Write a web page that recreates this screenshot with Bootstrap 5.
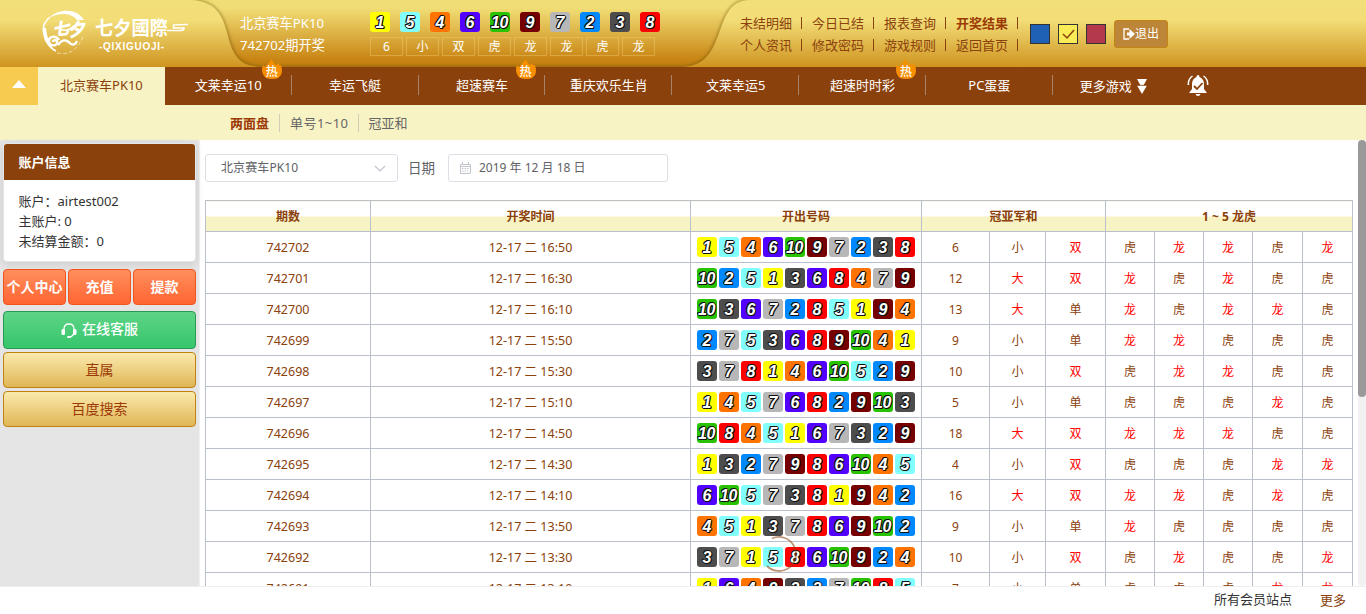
<!DOCTYPE html>
<html lang="zh-CN">
<head>
<meta charset="utf-8">
<meta name="viewport" content="width=device-width, initial-scale=1">
<title>七夕國際 - 开奖结果</title>
<link href="https://cdn.jsdelivr.net/npm/bootstrap@5.3.0/dist/css/bootstrap.min.css" rel="stylesheet">
<style>
body{font:13px/20px "Noto Sans","Noto Sans CJK SC",sans-serif;color:#333;height:614px;overflow:hidden;background:#fff}
a{text-decoration:none;color:inherit}
.topbar{height:67px;background:linear-gradient(#f3df7a 0,#f2dd77 30%,#cf9420 100%)}
.brand-box{width:190px;padding:8px 0 0 40px}
.draw-panel{width:560px;padding:12px 0 0 50px;color:#fff}
.draw-bg{left:0;top:0;width:560px;height:67px}
.draw-title{width:130px;font-size:13.2px;line-height:22px}
.ball{width:20px;height:20px;border-radius:3px;font:italic bold 16px/21px "Liberation Sans",Arial,sans-serif;color:#fff;text-align:center;
 text-shadow:-1px 0 #111,1px 0 #111,0 -1px #111,0 1px #111,1px 1px #111,-1px -1px #111}
.ball.n10{letter-spacing:-.5px;text-indent:-1px}
.n1{background:#ff0}.n2{background:#0089ff}.n3{background:#4d4d4d}.n4{background:#ff7300}.n5{background:#81ffff}
.n6{background:#5200ff}.n7{background:#b7b7b7}.n8{background:red}.n9{background:#760000}.n10{background:#28c200}
.top-balls{gap:10px}
.top-results{gap:3px;margin-top:5px}
.result-box{width:33px;height:19px;border:1px solid rgba(255,225,150,.3);font-size:12px;line-height:17px;text-align:center}
.quick{display:grid;grid-template-columns:repeat(4,72px);margin:12px 0 0 -10px;color:#8b410c;height:44px}
.quick a{line-height:22px;height:22px}
.quick a::after{content:"";display:inline-block;width:1px;height:12px;background:#8b410c;margin-left:9px;vertical-align:-1px}
.tools{gap:8px;margin-left:2px}
.swatch{width:20px;height:20px;border:1px solid #333}
.btn-exit{width:54px;height:28px;background:#bc8538;border:1px solid #c38413;border-radius:3px;color:#fff;font-size:12px;line-height:26px}
.gamebar{height:38px;background:#8b410c;color:#fff}
.gamebar .toggle{width:38px;background:#f7cb50}
.game{width:126.85px;line-height:36px;text-align:center;position:relative;font-size:13px}
.game:not(.on):not(.first-dark)::before{content:"";position:absolute;left:-1px;top:8px;width:1px;height:20px;background:#a8836c}
.game.on{background:#f8f3c5;color:#8b410c}
.hot{position:absolute;left:97px;top:-8px;width:20px;height:20px;z-index:2}
.hot span{position:absolute;left:0;top:4px;width:20px;font-size:12px;line-height:18px;color:#fff;font-weight:500}
.subbar{height:35px;background:#f8f3c5;color:#666;padding-left:220px;padding-top:9px}
.subbar a{height:18px;line-height:18px;padding:0 10px;border-right:1px solid #d0cdb4}
.subbar a:nth-child(2){letter-spacing:.45px}
.subbar a:last-child{border:0;padding-left:9px}.subbar a:first-child{color:#9c3a05;font-weight:700}
.work{height:446px}
.side{width:200px;background:#e5e5e5;border-right:1px solid #f0f0f0;padding:3px 3px 0 3px}
.acct{border:1px solid #e4e7ed;border-radius:4px;box-shadow:0 2px 8px rgba(0,0,0,.12);height:119px;overflow:hidden;background:#fff}
.acct h2{background:#8b410c;color:#fff;font-size:13px;font-weight:700;line-height:36px;margin:0;padding-left:14.5px}
.acct div{padding:11px 14.5px}
.side .btn{border-radius:4px;padding:0;font-size:14px;line-height:34px;height:36px}
.b-red{background:linear-gradient(#ff8f5d,#ff6531);border:1px solid #f2541f;color:#fff;font-weight:700;flex:1 1 0;white-space:nowrap}
.side .b-green{background:linear-gradient(#5fd486,#35c66b);border:1px solid #279952;color:#fff;height:38px;line-height:34px;font-weight:500}
.b-gold{background:linear-gradient(#faeaae,#e0b655);border:1px solid #c28212;color:#9c3a05}
.main{padding:14px 14px 0 5px;overflow:hidden;position:relative}
.field{height:28px;border:1px solid #dcdfe6;border-radius:3px;font-size:12px;line-height:26px;color:#606266}
.draws{width:1148px;table-layout:fixed;border-collapse:collapse;margin-top:18px;color:#8b410c;font-size:12px;text-align:center}
.draws th,.draws td{border:1px solid #b9c0cb;height:31px;padding:2px 0 0;line-height:18px}
.draws td.nums{padding-top:0}
.draws th{background:linear-gradient(#fff 50%,#f8f3c5 50%);font-weight:700}
.draws .wide{font-size:12.5px}
.draws .hit{color:red}
.spinner-arc{left:561px;top:396px;width:36px;height:36px}
.sbar{right:0;top:0;width:8px;height:446px;background:#f1f1f1;border-radius:4px}
.sbar i{display:block;height:257px;border-radius:4px;background:#999}
.foot{height:28px;border-top:1px solid #eee;padding-right:20px;background:#fff}
</style>
</head>
<body>
<header class="topbar d-flex">
  <div class="brand-box flex-shrink-0">
    <svg width="150" height="50" viewBox="0 0 150 50" fill="#fff" font-family="'Noto Sans CJK SC',sans-serif">
      <path d="M10 9Q-1 18 6 31Q9 40 16 43" fill="none" stroke="#fff" stroke-width="1.600"/>
      <path d="M44 12C37 0 19 0 9 10C19 4 31 5 37 12Z"/>
      <path d="M4 20Q1 34 14 42Q7 33 6 20Z"/>
      <path d="M17 45Q36 49 44 26" fill="none" stroke="#fff" stroke-opacity=".55" stroke-dasharray="4 2"/>
      <path d="M19 32C16 27 8 28 9 34C10 39 18 38 17 34C17 32 13 31 13 34M18 37C23 30 27 32 31 36Q35 38 37 33" fill="none" stroke="#fff" stroke-width="2.400"/>
      <g transform="rotate(-6 28 20)"><text x="12" y="26" font-size="17" font-weight="900" font-style="italic">七</text>
      <text x="27" y="29" font-size="18" font-weight="900" font-style="italic">夕</text></g>
      <path d="M20 21Q26 24 31 20T44 16" fill="none" stroke="#fff" stroke-width="1.500"/>
      <text x="55" y="27" font-size="19" font-weight="700" textLength="73" lengthAdjust="spacingAndGlyphs">七夕國際</text>
      <path d="M127 22.500H141Q144 22.500 144 20H133.500V17Q134 16.500 148 16.500" fill="none" stroke="#fff" stroke-width="1.600"/>
      <text x="59" y="41.500" font-size="10" font-weight="700" font-family="'Liberation Sans',Arial,sans-serif" textLength="65">-QIXIGUOJI-</text>
    </svg>
  </div>
  <div class="draw-panel position-relative flex-shrink-0">
    <svg class="draw-bg position-absolute" viewBox="0 0 560 67">
      <defs>
        <linearGradient id="pg" x1="0" y1="0" x2="0" y2="1"><stop offset="0" stop-color="#f1dd75"/><stop offset=".12" stop-color="#f1dd75"/><stop offset=".9" stop-color="#c88412"/><stop offset="1" stop-color="#c07e12"/></linearGradient>
        <filter id="sf" x="-5%" y="-20%" width="110%" height="140%"><feGaussianBlur stdDeviation="1.500"/></filter>
        <clipPath id="pc"><path d="M0 0C56 2 20 66 72 67H492C540 66 520 0 560 0Z"/></clipPath>
      </defs>
      <path d="M0 0C56 2 20 66 72 67H492C540 66 520 0 560 0Z" fill="url(#pg)"/>
      <path d="M0 0C56 2 20 66 72 67H492C540 66 520 0 560 0" fill="none" stroke="#684e0a" stroke-opacity=".55" stroke-width="2.500" filter="url(#sf)" clip-path="url(#pc)"/>
    </svg>
    <div class="d-flex position-relative">
      <div class="draw-title">北京赛车PK10<br>742702期开奖</div>
      <div>
        <div class="d-flex top-balls" id="topBalls"></div>
        <div class="d-flex top-results" id="topResults"></div>
      </div>
    </div>
  </div>
  <nav class="quick flex-shrink-0">
    <a href="#">未结明细</a><a href="#">今日已结</a><a href="#">报表查询</a><a href="#" class="fw-bold" style="color:#9c3a05">开奖结果</a>
    <a href="#">个人资讯</a><a href="#">修改密码</a><a href="#">游戏规则</a><a href="#">返回首页</a>
  </nav>
  <div class="tools d-flex align-items-center">
    <span class="swatch" style="background:#1f61b5"></span>
    <span class="swatch" style="background:#faec57"><svg class="d-block" width="18" height="18" fill="none" stroke="#8b410c" stroke-width="1.500"><path d="M4 9L8 13L15 5"/></svg></span>
    <span class="swatch" style="background:#b5394c"></span>
    <a href="#" class="btn-exit d-flex align-items-center justify-content-center"><svg width="12" height="12" viewBox="0 0 12 12"><path d="M6 1H1V11H6" fill="none" stroke="#fff" stroke-width="1.300"/><path d="M4 4.500H6.500V1L12 6L6.500 11V7.500H4Z" fill="#fff"/></svg>退出</a>
  </div>
</header>
<nav class="gamebar d-flex">
  <a class="toggle flex-shrink-0" href="#"><svg class="d-block" width="38" height="38"><path d="M12 21L19 13L26 21Z" fill="#fff"/></svg></a>
  <a href="#" class="game on">北京赛车PK10</a>
  <a href="#" class="game first-dark">文莱幸运10<i class="hot fst-normal"><svg class="d-block" width="20" height="20"><path d="M4 19Q-2 14 1 6L3 8Q7 4 10 0Q10 3 14 6L17 4Q16 7 19 6Q22 15 16 19Q10 21 4 19Z" fill="#f68f00"/></svg><span>热</span></i></a>
  <a href="#" class="game">幸运飞艇</a>
  <a href="#" class="game">超速赛车<i class="hot fst-normal"><svg class="d-block" width="20" height="20"><path d="M4 19Q-2 14 1 6L3 8Q7 4 10 0Q10 3 14 6L17 4Q16 7 19 6Q22 15 16 19Q10 21 4 19Z" fill="#f68f00"/></svg><span>热</span></i></a>
  <a href="#" class="game">重庆欢乐生肖</a>
  <a href="#" class="game">文莱幸运5</a>
  <a href="#" class="game">超速时时彩<i class="hot fst-normal"><svg class="d-block" width="20" height="20"><path d="M4 19Q-2 14 1 6L3 8Q7 4 10 0Q10 3 14 6L17 4Q16 7 19 6Q22 15 16 19Q10 21 4 19Z" fill="#f68f00"/></svg><span>热</span></i></a>
  <a href="#" class="game">PC蛋蛋</a>
  <a href="#" class="game text-start d-flex align-items-center" style="padding-left:27px"><span>更多游戏</span><svg class="ms-1" width="12" height="18"><path d="M1 2H11L7.500 8.500H11L6 17L1 8.500H4.500Z" fill="#fff"/><path d="M1 8.300H11" stroke="#8b410c" stroke-width=".8"/></svg></a>
  <a href="#" class="d-block" style="margin-left:7px;padding-top:7px"><svg class="d-block" width="22" height="23" viewBox="0 0 22 23"><path d="M11 1Q12.500 1 12.500 3Q17 5 17 10V15L20 19H2L5 15V10Q5 5 9.500 3Q9.500 1 11 1ZM8.500 20H13.500Q13 22 11 22T8.500 20Z" fill="#fff"/><path d="M7 12L10 15L15.500 9" fill="none" stroke="#8b410c" stroke-width="1.800"/><path d="M5.500 2Q1 5 1.300 11M16.500 2Q21 5 20.700 11" fill="none" stroke="#fff" stroke-width="1.500"/></svg></a>
</nav>
<nav class="subbar d-flex"><a href="#">两面盘</a><a href="#">单号1~10</a><a href="#">冠亚和</a></nav>
<div class="work d-flex position-relative">
  <aside class="side flex-shrink-0">
    <section class="acct"><h2>账户信息</h2><div>账户：airtest002<br>主账户: 0<br>未结算金额：0</div></section>
    <div class="d-flex" style="gap:2px;margin-top:7px"><a href="#" class="btn b-red">个人中心</a><a href="#" class="btn b-red">充值</a><a href="#" class="btn b-red">提款</a></div>
    <a href="#" class="btn b-green d-block" style="margin-top:6px"><svg width="16" height="17" viewBox="0 0 16 17" style="margin-right:5px"><path d="M3 9V7Q3 2 8 2T13 7V9Q13 14 9 15" fill="none" stroke="#fff" stroke-width="1.300"/><rect x="0.500" y="7" width="3.500" height="6" rx="1.500" fill="#fff"/><rect x="12" y="7" width="3.500" height="6" rx="1.500" fill="#fff"/><rect x="6" y="14" width="4" height="2" rx="1" fill="#fff"/></svg>在线客服</a>
    <a href="#" class="btn b-gold d-block" style="margin-top:3px">直属</a>
    <a href="#" class="btn b-gold d-block" style="margin-top:3px">百度搜索</a>
  </aside>
  <main class="main flex-grow-1">
    <div class="d-flex align-items-center">
      <div class="field d-flex align-items-center justify-content-between" style="width:193px;padding:0 10px 0 15px"><span style="letter-spacing:.1px">北京赛车PK10</span><svg width="14" height="14" fill="none" stroke="#c0c4cc" stroke-width="1.200"><path d="M2 5L7 10L12 5"/></svg></div>
      <span style="margin:-1px 13px 0 10px;font-size:13.500px;color:#606266">日期</span>
      <div class="field d-flex align-items-center" style="width:220px;padding-left:10px"><svg width="13" height="12" fill="none" stroke="#c0c4cc" class="me-2"><path d="M1.500 2.500H11.500V11.500H1.500ZM1.500 4.500H11.500M3.500 0V3M9.500 0V3"/><path d="M3 6.500H10M3 9H10" stroke-dasharray="1.500 1"/></svg><span style="margin-left:-1px">2019 年 12 月 18 日</span></div>
    </div>
    <table class="draws">
      <colgroup><col style="width:165px"><col style="width:320px"><col style="width:231px"><col style="width:68px"><col style="width:56px"><col style="width:60px"><col style="width:49px"><col style="width:49px"><col style="width:49px"><col style="width:50px"><col style="width:50px"></colgroup>
      <thead><tr><th>期数</th><th>开奖时间</th><th>开出号码</th><th colspan="3">冠亚军和</th><th colspan="5">1 ~ 5 龙虎</th></tr></thead>
      <tbody id="drawRows"></tbody>
    </table>
    <svg class="spinner-arc position-absolute" viewBox="0 0 36 36"><path d="M11 2.500A17 17 0 1 1 6 30" fill="none" stroke="#8b410c" stroke-opacity=".55" stroke-width="1.800"/></svg>
  </main>
  <div class="sbar position-absolute"><i></i></div>
</div>
<footer class="foot d-flex justify-content-end"><a href="#" style="line-height:24px">所有会员站点</a><a href="#" style="margin-left:28px;line-height:27px;color:#8b410c">更多</a></footer>
<script>
const draws = [
  ['1 5 4 6 10 9 7 2 3 8','16:50','6小双虎龙龙虎龙'],
  ['10 2 5 1 3 6 8 4 7 9','16:30','12大双龙虎龙虎虎'],
  ['10 3 6 7 2 8 5 1 9 4','16:10','13大单龙虎龙龙虎'],
  ['2 7 5 3 6 8 9 10 4 1','15:50','9小单龙龙虎虎虎'],
  ['3 7 8 1 4 6 10 5 2 9','15:30','10小双虎龙龙虎虎'],
  ['1 4 5 7 6 8 2 9 10 3','15:10','5小单虎虎虎龙虎'],
  ['10 8 4 5 1 6 7 3 2 9','14:50','18大双龙龙龙虎虎'],
  ['1 3 2 7 9 8 6 10 4 5','14:30','4小双虎虎虎龙龙'],
  ['6 10 5 7 3 8 1 9 4 2','14:10','16大双龙龙虎龙虎'],
  ['4 5 1 3 7 8 6 9 10 2','13:50','9小单龙虎虎虎虎'],
  ['3 7 1 5 8 6 10 9 2 4','13:30','10小双虎龙虎虎龙'],
  ['1 6 4 9 3 2 7 10 8 5','13:10','7小单虎虎虎龙龙']
];
const balls = s => s.split(' ').map(n => `<span class="ball n${n}">${n}</span>`).join('');
const split = s => s.match(/\d+|\D/g);
document.getElementById('topBalls').innerHTML = balls(draws[0][0]);
document.getElementById('topResults').innerHTML = ['6','小','双','虎','龙','龙','虎','龙'].map(t => `<span class="result-box">${t}</span>`).join('');
document.getElementById('drawRows').innerHTML = draws.map(([nums, time, res], i) =>
  `<tr><td class="wide">${742702 - i}</td><td class="wide">12-17 二 ${time}</td><td class="nums"><div class="d-flex" style="gap:2px;padding-left:6px">${balls(nums)}</div></td>` +
  split(res).map(t => `<td${'大双龙'.includes(t) ? ' class="hit"' : ''}>${t}</td>`).join('') + '</tr>').join('');
</script>
<script src="https://cdn.jsdelivr.net/npm/bootstrap@5.3.0/dist/js/bootstrap.bundle.min.js"></script>
</body>
</html>
